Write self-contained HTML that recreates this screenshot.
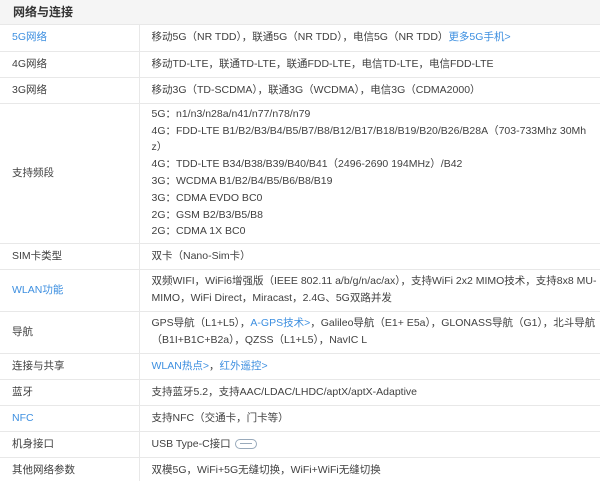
<!DOCTYPE html><html><head><meta charset="utf-8"><style>
body{margin:0;background:#fff;font-family:"Liberation Sans","Noto Sans CJK SC",sans-serif;font-size:10.5px;color:#404040;}
.w{width:600px;height:481px;position:relative;overflow:hidden}
.h{height:25px;background:#f5f5f5;border-bottom:1px solid #e8e8e8;font-size:12px;font-weight:bold;color:#333;line-height:25px;padding-left:13px;box-sizing:border-box}
table{border-collapse:collapse;width:600px;table-layout:fixed}
td{border-bottom:1px solid #e8e8e8;padding:0 0 0 12px;vertical-align:middle;line-height:16.8px;box-sizing:border-box}
td.l{width:139px;border-right:1px solid #e8e8e8;padding-left:12px}
tr.s td{height:26px}
a{color:#3d8fe0;text-decoration:none}
.usb{display:inline-block;width:20px;height:8px;border:1px solid #9ab;border-radius:5px;vertical-align:middle;position:relative;margin-left:4px}
.usb:after{content:"";position:absolute;left:4px;right:4px;top:3px;height:1px;background:#9ab}
</style></head><body><div class="w">
<div class="h">网络与连接</div>
<table>
<tr class="s"><td class="l"><a>5G网络</a></td><td>移动5G（NR TDD），联通5G（NR TDD），电信5G（NR TDD）<a>更多5G手机&gt;</a></td></tr>
<tr class="s"><td class="l">4G网络</td><td>移动TD-LTE，联通TD-LTE，联通FDD-LTE，电信TD-LTE，电信FDD-LTE</td></tr>
<tr class="s"><td class="l">3G网络</td><td>移动3G（TD-SCDMA），联通3G（WCDMA），电信3G（CDMA2000）</td></tr>
<tr><td class="l" style="height:140px">支持频段</td><td style="padding-right:12px;word-break:break-all">5G：n1/n3/n28a/n41/n77/n78/n79<br>4G：FDD-LTE B1/B2/B3/B4/B5/B7/B8/B12/B17/B18/B19/B20/B26/B28A（703-733Mhz 30Mhz）<br>4G：TDD-LTE B34/B38/B39/B40/B41（2496-2690 194MHz）/B42<br>3G：WCDMA B1/B2/B4/B5/B6/B8/B19<br>3G：CDMA EVDO BC0<br>2G：GSM B2/B3/B5/B8<br>2G：CDMA 1X BC0</td></tr>
<tr class="s"><td class="l">SIM卡类型</td><td>双卡（Nano-Sim卡）</td></tr>
<tr><td class="l" style="height:42px"><a>WLAN功能</a></td><td style="padding-right:2px">双频WIFI，WiFi6增强版（IEEE 802.11 a/b/g/n/ac/ax），支持WiFi 2x2 MIMO技术，支持8x8 MU-MIMO，WiFi Direct，Miracast，2.4G、5G双路并发</td></tr>
<tr><td class="l" style="height:42px">导航</td><td style="padding-right:2px">GPS导航（L1+L5），<a>A-GPS技术&gt;</a>，Galileo导航（E1+ E5a），GLONASS导航（G1），北斗导航（B1I+B1C+B2a），QZSS（L1+L5），NavIC L</td></tr>
<tr class="s"><td class="l">连接与共享</td><td><a>WLAN热点&gt;</a>，<a>红外遥控&gt;</a></td></tr>
<tr class="s"><td class="l">蓝牙</td><td>支持蓝牙5.2，支持AAC/LDAC/LHDC/aptX/aptX-Adaptive</td></tr>
<tr class="s"><td class="l"><a>NFC</a></td><td>支持NFC（交通卡，门卡等）</td></tr>
<tr class="s"><td class="l">机身接口</td><td>USB Type-C接口<span class="usb"></span></td></tr>
<tr class="s"><td class="l">其他网络参数</td><td>双模5G，WiFi+5G无缝切换，WiFi+WiFi无缝切换</td></tr>
</table></div></body></html>
